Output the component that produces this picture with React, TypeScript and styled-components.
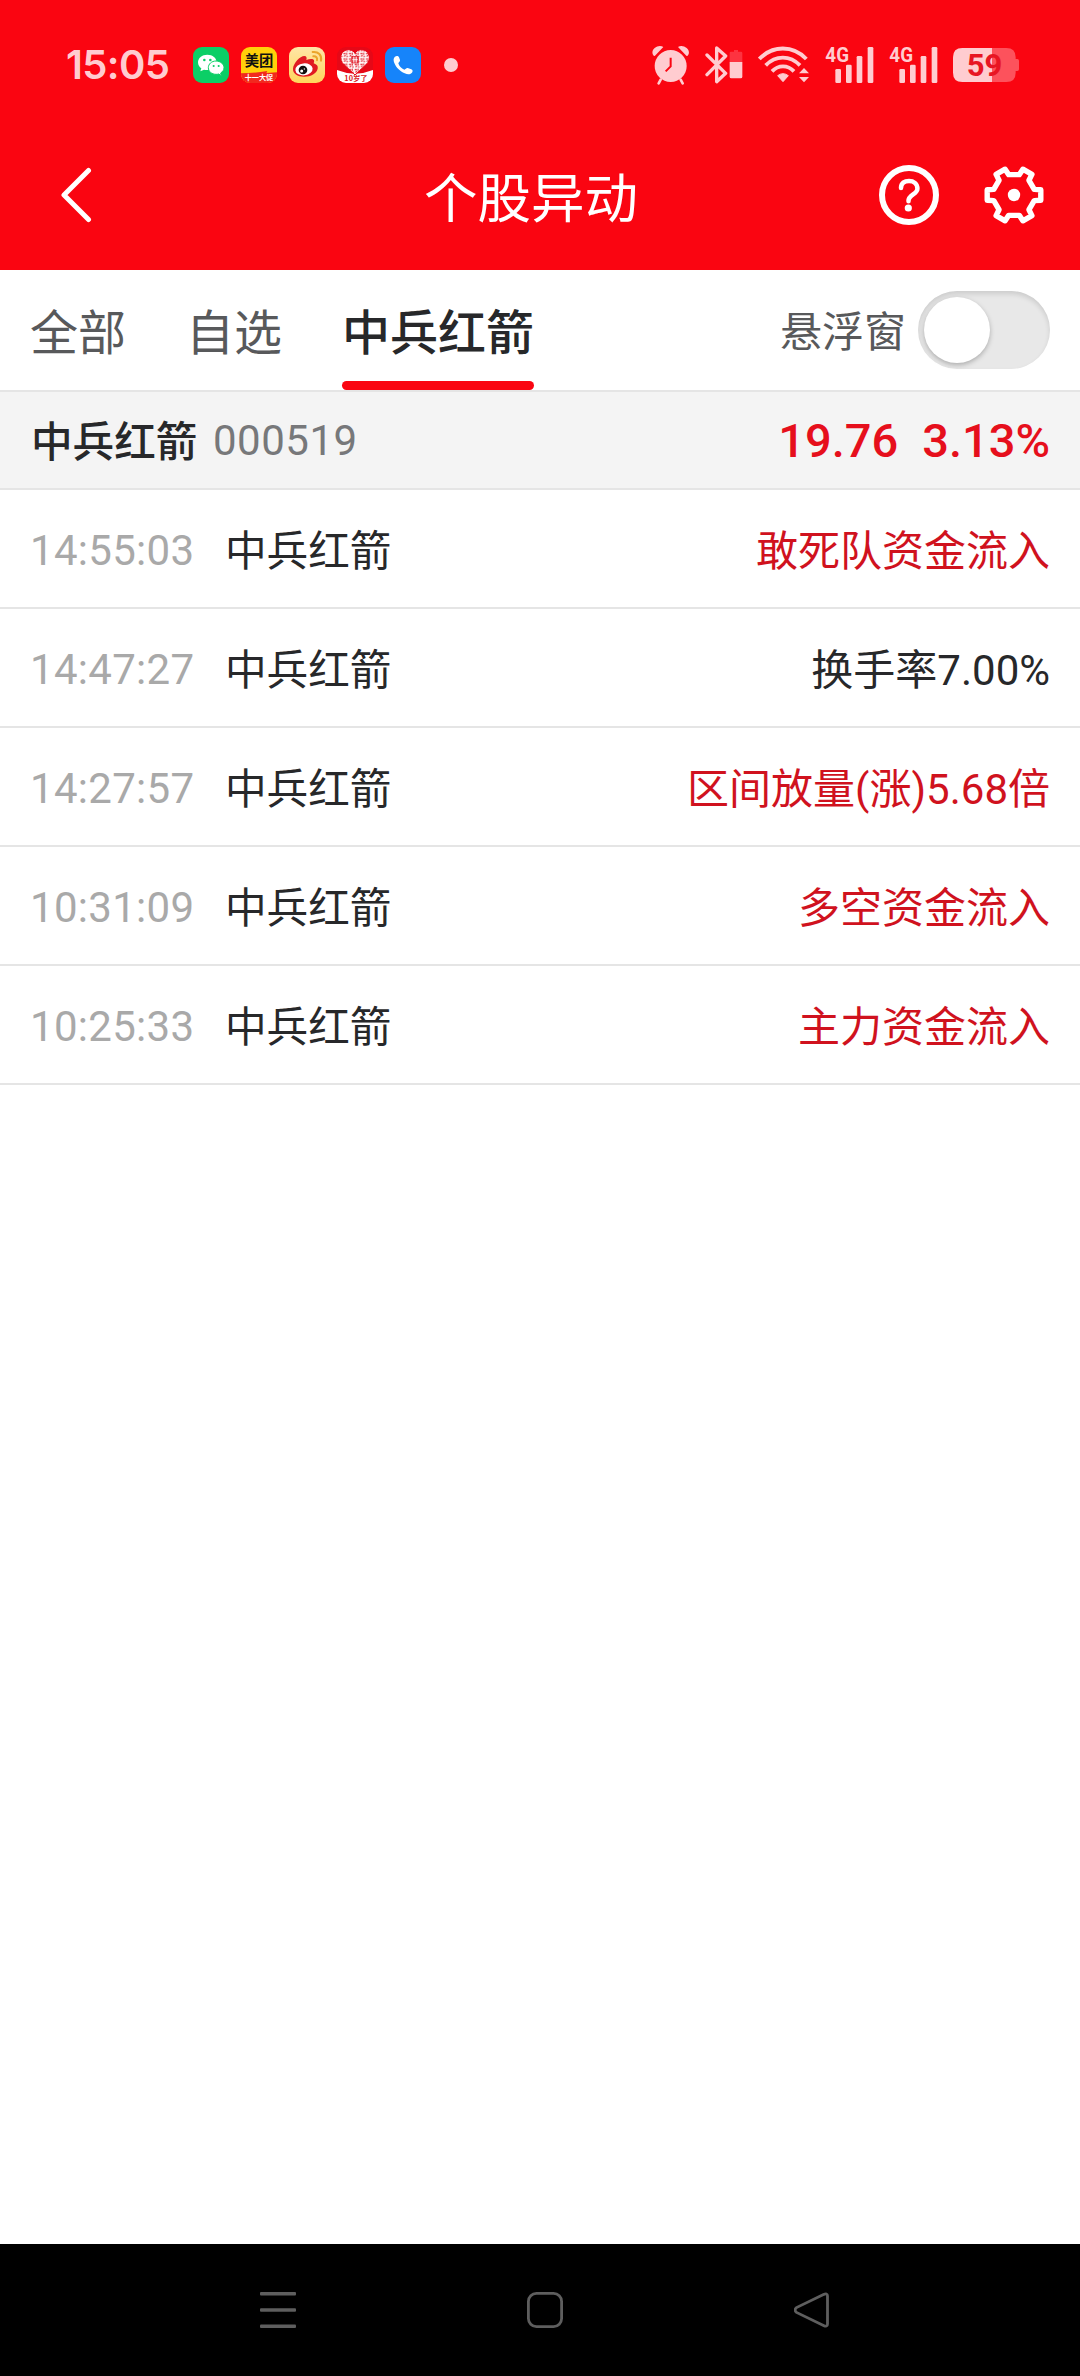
import React from "react";
import styled, { createGlobalStyle } from "styled-components";

const RED = "#fa0511";
const PALE = "#ffccd0";

const GlobalStyle = createGlobalStyle`
  * { box-sizing: border-box; }
  html, body { margin: 0; padding: 0; background: #fff; }
  body { font-family: Roboto, "Noto Sans CJK SC", sans-serif; color: #27282a; }
  svg { display: block; flex: none; }
`;

const Screen = styled.div`
  width: 1080px;
  height: 2376px;
  display: flex;
  flex-direction: column;
  background: #fff;
  overflow: hidden;
`;

const Header = styled.header`
  height: 270px;
  flex: none;
  background: ${RED};
`;

const StatusBar = styled.div`
  height: 130px;
  padding: 0 61px 0 66px;
  display: flex;
  align-items: center;
  justify-content: space-between;
`;

const Clock = styled.span`
  width: 127px;
  font-family: Inter, Roboto, sans-serif;
  font-size: 40px;
  line-height: 48px;
  font-weight: 600;
  letter-spacing: -0.6px;
  color: ${PALE};
  white-space: nowrap;
`;

const StatusGroup = styled.div<{ $gap?: number }>`
  display: flex;
  align-items: center;
  gap: ${(p) => p.$gap ?? 0}px;
`;

const Dot = styled.i`
  width: 14px;
  height: 14px;
  margin-left: 11px;
  border-radius: 50%;
  background: ${PALE};
`;

const TitleBar = styled.div`
  height: 130px;
  padding: 0 36px 0 60px;
  display: flex;
  align-items: center;
`;

const Title = styled.h1`
  margin: 10px 0 0 332px;
  font-size: 53.5px;
  line-height: 70px;
  font-weight: 400;
  color: #fff;
`;

const Actions = styled.div`
  margin-left: auto;
  display: flex;
  gap: 45px;
`;

const TabStrip = styled.nav`
  height: 122px;
  flex: none;
  padding: 0 30px;
  display: flex;
  gap: 60px;
  border-bottom: 2px solid #e5e5e5;
`;

const Tab = styled.span<{ $active?: boolean }>`
  display: flex;
  flex-direction: column;
  height: 120px;
  font-size: 48px;
  font-weight: ${(p) => (p.$active ? 500 : 400)};
  color: ${(p) => (p.$active ? "#27282a" : "#58595b")};
`;

const TabLabel = styled.span`
  height: 111px;
  padding-top: 8px;
  line-height: 111px;
`;

const Underline = styled.i`
  height: 9px;
  flex: none;
  border-radius: 4.5px;
  background: ${RED};
`;

const FloatSwitch = styled.div`
  margin-left: auto;
  display: flex;
  align-items: center;
  gap: 12px;
  font-size: 42px;
  color: #58595b;
`;

const SwitchLabel = styled.span`
  margin-bottom: 3px;
`;

const SwitchTrack = styled.span`
  width: 132px;
  height: 78px;
  padding: 6px;
  border-radius: 39px;
  background: #e8e8e8;
  box-shadow: inset 0 3px 5px rgba(0, 0, 0, 0.12);
`;

const SwitchKnob = styled.span`
  display: block;
  width: 66px;
  height: 66px;
  border-radius: 50%;
  background: #fff;
  box-shadow: 0 2px 5px rgba(0, 0, 0, 0.26);
`;

const StockBar = styled.section`
  height: 98px;
  flex: none;
  padding: 1px 30px 0 31px;
  display: flex;
  align-items: center;
  background: #f4f4f4;
  border-bottom: 2px solid #e5e5e5;
  font-size: 42px;
`;

const StockName = styled.strong`
  width: 182px;
  margin-bottom: 4px;
  font-size: 41.6px;
  font-weight: 500;
`;

const StockCode = styled.span`
  letter-spacing: 0.5px;
  color: #77787a;
`;

const Quote = styled.div`
  margin-left: auto;
  display: flex;
  gap: 24px;
  font-size: 47px;
  font-weight: 500;
  color: #e60f1c;
`;

const List = styled.main`
  flex: 1;
`;

const Row = styled.div`
  height: 119px;
  padding: 3px 30px 0;
  display: flex;
  align-items: center;
  border-bottom: 2px solid #e5e5e5;
  font-size: 42px;
`;

const Time = styled.time`
  width: 195px;
  letter-spacing: 0.3px;
  color: #a9a9a9;
`;

const RowName = styled.span`
  margin-bottom: 4px;
  font-size: 41.6px;
`;

const Event = styled.span<{ $red: boolean }>`
  margin: 0 0 6px auto;
  color: ${(p) => (p.$red ? "#d0121e" : "#27282a")};
`;

const NavBar = styled.footer`
  height: 132px;
  flex: none;
  padding: 0 250px 0 260px;
  display: flex;
  align-items: center;
  justify-content: space-between;
  background: #000;
`;

const WeChat = () => (
  <svg width="36" height="36" viewBox="0 0 108 108">
    <rect width="108" height="108" rx="27" fill="#0bcf66" />
    <path d="M43 23c-16 0-28 10-28 23 0 8 4 14 10 18l-3 9 11-5c3 1 6 1 10 1 16 0 28-10 28-23S59 23 43 23z" fill="#fff" />
    <path d="M69 42c-13 0-23 9-23 20s10 20 23 20c3 0 5 0 8-1l8 5-2-8c6-4 10-9 10-16 0-11-11-20-24-20z" fill="#fff" stroke="#0bcf66" strokeWidth="3" />
    <g fill="#0bcf66">
      <circle cx="34" cy="39" r="3.8" />
      <circle cx="52" cy="39" r="3.8" />
      <circle cx="62" cy="57" r="3.2" />
      <circle cx="77" cy="57" r="3.2" />
    </g>
  </svg>
);

const Meituan = () => (
  <svg width="36" height="36" viewBox="0 0 108 108">
    <clipPath id="mt"><rect width="108" height="108" rx="27" /></clipPath>
    <g clipPath="url(#mt)">
      <rect width="108" height="108" fill="#ffd00a" />
      <path d="M0 79q38 0 79-7l-3 6 32-2v32H0z" fill="#f2281e" />
      <text x="11" y="57" fontSize="43" fontWeight="700" fill="#111" fontFamily="Noto Sans CJK SC, sans-serif">美团</text>
      <text x="11" y="100" fontSize="21.5" fontWeight="700" fill="#fff" fontFamily="Noto Sans CJK SC, sans-serif">十一大促</text>
    </g>
  </svg>
);

const Weibo = () => (
  <svg width="36" height="36" viewBox="0 0 108 108">
    <defs>
      <linearGradient id="wb" x1="0" y1="0" x2="0" y2="1">
        <stop offset="0" stopColor="#ffe6a6" />
        <stop offset="1" stopColor="#ffd65c" />
      </linearGradient>
    </defs>
    <rect width="108" height="108" rx="27" fill="url(#wb)" />
    <path d="M46 27c7 0 8 6 6 12 9-4 21-5 23 1 1 4 0 6-1 9 9 3 14 8 12 16-3 14-20 24-40 24-21 0-35-10-34-24C13 49 33 27 46 27z" fill="#e01b22" />
    <ellipse cx="45" cy="67" rx="26" ry="18" transform="rotate(-7 45 67)" fill="#fff" />
    <circle cx="42" cy="69" r="13" fill="#111" />
    <circle cx="38" cy="72" r="4.5" fill="#fff" />
    <circle cx="46" cy="66" r="2" fill="#fff" />
    <g fill="none" stroke="#eba52c" strokeWidth="6" strokeLinecap="round">
      <path d="M71 15c17-2 28 9 25 26" />
      <path d="M73 28c8-1 13 4 11 12" />
    </g>
  </svg>
);

const AnniversaryApp = () => (
  <svg width="36" height="36" viewBox="0 0 108 108">
    <defs>
      <clipPath id="an"><rect width="108" height="108" rx="27" /></clipPath>
      <pattern id="tiles" width="17" height="16" patternUnits="userSpaceOnUse">
        <rect width="17" height="16" fill="#fff" />
        <path d="M2 4h6M12 1v6M4 12l5-3M12 12h4" stroke="#e01825" strokeWidth="3.6" />
      </pattern>
    </defs>
    <g clipPath="url(#an)">
      <rect width="108" height="108" fill="#e60817" />
      <path d="M0 69q54 22 108 0v39H0z" fill="#fff" />
      <path d="M54 19C48 7 28 3 17 16 8 27 10 41 17 49l37 35 37-35c7-8 9-22 0-33C80 3 60 7 54 19z" fill="url(#tiles)" stroke="#e60817" strokeWidth="3" />
      <rect x="43" y="27" width="22" height="22" fill="#e01825" />
      <path d="M49 29v18M54 29v18M59 29v18M46 38h16" stroke="#fff" strokeWidth="2.6" />
      <text x="22" y="101" fontSize="22" fontWeight="700" fill="#d91522" fontFamily="Noto Sans CJK SC, sans-serif">10岁了</text>
    </g>
  </svg>
);

const PhoneApp = () => (
  <svg width="36" height="36" viewBox="0 0 108 108">
    <rect width="108" height="108" rx="27" fill="#1684fa" />
    <path d="M29 30c5-5 11-4 13 1l3 8c1 4-4 6-5 10 2 8 9 16 18 19 4-1 6-6 10-5l11 4c5 2 5 7 1 11-5 5-12 5-21 1C45 73 33 61 28 48c-3-7-3-14 1-18z" fill="#fff" />
  </svg>
);

const Alarm = () => (
  <svg width="38" height="40" viewBox="66 42 114 120">
    <g fill={PALE}>
      <circle cx="122" cy="105" r="48" />
      <path d="M70 73c-5-7-3-16 4-22 8-7 19-8 26-3L75 74c-2 2-4 1-5-1zM174 73c5-7 3-16-4-22-8-7-19-8-26-3l25 26c2 2 4 1 5-1z" />
    </g>
    <path d="M92 146l-6 11M152 146l6 11" stroke={PALE} strokeWidth="8" strokeLinecap="round" />
    <path d="M122 80v26l-15 15" fill="none" stroke={RED} strokeWidth="6" />
  </svg>
);

const Bluetooth = () => (
  <svg width="38" height="40" viewBox="228 42 114 120">
    <path d="M234 72l56 55-27 25V51l27 24-56 56" fill="none" stroke={PALE} strokeWidth="10" strokeLinecap="round" strokeLinejoin="round" />
    <path d="M315 57h12v5h9q4 0 4 4v27h-38V66q0-4 4-4h9z" fill="#fd3340" />
    <path d="M302 93h38v44q0 5-5 5h-28q-5 0-5-5z" fill={PALE} />
  </svg>
);

const Wifi = () => (
  <svg width="52" height="40" viewBox="390 42 156 120">
    <g fill="none" stroke={PALE} strokeWidth="11.5">
      <path d="M394 84c40-42 101-42 141 0" />
      <path d="M413 103c30-31 73-31 103 0" />
      <path d="M432 121c19-20 47-20 66 0" />
    </g>
    <path d="M449 134q16-12 32 0l-16 18z" fill={PALE} stroke={PALE} strokeWidth="3" strokeLinejoin="round" />
    <path d="M513 127l15-16 15 16zM513 138l15 16 15-16z" fill={PALE} />
  </svg>
);

const Signal = () => (
  <svg width="49" height="50" viewBox="43 27 147 150">
    <text x="44" y="93" fontSize="62" fontWeight="700" textLength="71" lengthAdjust="spacingAndGlyphs" fill={PALE} fontFamily="Roboto, sans-serif">4G</text>
    <g fill={PALE}>
      <rect x="74" y="114" width="17" height="42" rx="4" />
      <rect x="106" y="101" width="17" height="55" rx="4" />
      <rect x="138" y="75" width="17" height="81" rx="4" />
      <rect x="171" y="48" width="17" height="108" rx="4" />
    </g>
  </svg>
);

const Battery = () => (
  <svg width="66" height="34" viewBox="429 54 198 102">
    <path d="M457 54h89v102h-89q-28 0-28-28V82q0-28 28-28z" fill={PALE} />
    <path d="M546 54h43q28 0 28 28v5h5q5 0 5 5v26q0 5-5 5h-5v5q0 28-28 28h-43z" fill="#fd525c" />
    <text x="470" y="138" fontSize="92" fontWeight="700" textLength="107" lengthAdjust="spacingAndGlyphs" fill="#e81523" fontFamily="Roboto, sans-serif">59</text>
  </svg>
);

const Back = () => (
  <svg width="32" height="56" viewBox="0 0 32 56" fill="none" stroke="#fff" strokeWidth="5" strokeLinecap="round" strokeLinejoin="round">
    <path d="M28.5 3.5L4 28l24.5 24.5" />
  </svg>
);

const Help = () => (
  <svg width="60" height="60" viewBox="0 0 60 60" fill="none" stroke="#fff">
    <circle cx="30" cy="30" r="27" strokeWidth="6" />
    <path d="M22 23c0-5 3.5-7 8-7s8.4 2.6 8.4 7.8c0 5.4-8.9 6-8.9 12v.4" strokeWidth="4.5" strokeLinecap="round" />
    <circle cx="29.3" cy="43" r="3.6" fill="#fff" stroke="none" />
  </svg>
);

const gearPoints = [0, 60, 120, 180, 240, 300]
  .flatMap((a) => [[21, -15.5], [27.3, -11], [27.3, 11], [21, 15.5]].map(([r, d]) => {
    const t = ((a + d) * Math.PI) / 180;
    return `${(30 + r * Math.cos(t)).toFixed(2)},${(30 + r * Math.sin(t)).toFixed(2)}`;
  }))
  .join(" ");

const Gear = () => (
  <svg width="60" height="60" viewBox="0 0 60 60">
    <polygon points={gearPoints} fill="none" stroke="#fff" strokeWidth="5.4" strokeLinejoin="round" />
    <circle cx="30" cy="30" r="6.2" fill="#fff" />
  </svg>
);

const MenuIcon = () => (
  <svg width="36" height="36" viewBox="0 0 36 36" fill="#5e5e5e">
    <rect y="0" width="36" height="3.5" rx="1" />
    <rect y="16.3" width="36" height="3.5" rx="1" />
    <rect y="32.5" width="36" height="3.5" rx="1" />
  </svg>
);

const HomeIcon = () => (
  <svg width="36" height="36" viewBox="0 0 36 36" fill="none" stroke="#5e5e5e" strokeWidth="2.8">
    <rect x="1.4" y="1.4" width="33.2" height="33.2" rx="8" />
  </svg>
);

const BackTriangle = () => (
  <svg width="36" height="36" viewBox="0 0 36 36" fill="none" stroke="#5e5e5e" strokeWidth="2.8">
    <path d="M29.5 2.6Q33.5.6 33.5 4v28q0 3.4-4 1.4L2.5 20.4q-3-2.4 0-4.8z" />
  </svg>
);

const events = [
  { time: "14:55:03", text: "敢死队资金流入", red: true },
  { time: "14:47:27", text: "换手率7.00%", red: false },
  { time: "14:27:57", text: "区间放量(涨)5.68倍", red: true },
  { time: "10:31:09", text: "多空资金流入", red: true },
  { time: "10:25:33", text: "主力资金流入", red: true },
];

export default function App() {
  return (
    <Screen>
      <GlobalStyle />
      <Header>
        <StatusBar>
          <StatusGroup>
            <Clock>15:05</Clock>
            <StatusGroup $gap={12}>
              <WeChat />
              <Meituan />
              <Weibo />
              <AnniversaryApp />
              <PhoneApp />
              <Dot />
            </StatusGroup>
          </StatusGroup>
          <StatusGroup $gap={15}>
            <Alarm />
            <Bluetooth />
            <Wifi />
            <Signal />
            <Signal />
            <Battery />
          </StatusGroup>
        </StatusBar>
        <TitleBar>
          <Back />
          <Title>个股异动</Title>
          <Actions>
            <Help />
            <Gear />
          </Actions>
        </TitleBar>
      </Header>
      <TabStrip>
        <Tab><TabLabel>全部</TabLabel></Tab>
        <Tab><TabLabel>自选</TabLabel></Tab>
        <Tab $active>
          <TabLabel>中兵红箭</TabLabel>
          <Underline />
        </Tab>
        <FloatSwitch>
          <SwitchLabel>悬浮窗</SwitchLabel>
          <SwitchTrack><SwitchKnob /></SwitchTrack>
        </FloatSwitch>
      </TabStrip>
      <StockBar>
        <StockName>中兵红箭</StockName>
        <StockCode>000519</StockCode>
        <Quote>
          <span>19.76</span>
          <span>3.13%</span>
        </Quote>
      </StockBar>
      <List>
        {events.map((e) => (
          <Row key={e.time}>
            <Time>{e.time}</Time>
            <RowName>中兵红箭</RowName>
            <Event $red={e.red}>{e.text}</Event>
          </Row>
        ))}
      </List>
      <NavBar>
        <MenuIcon />
        <HomeIcon />
        <BackTriangle />
      </NavBar>
    </Screen>
  );
}
